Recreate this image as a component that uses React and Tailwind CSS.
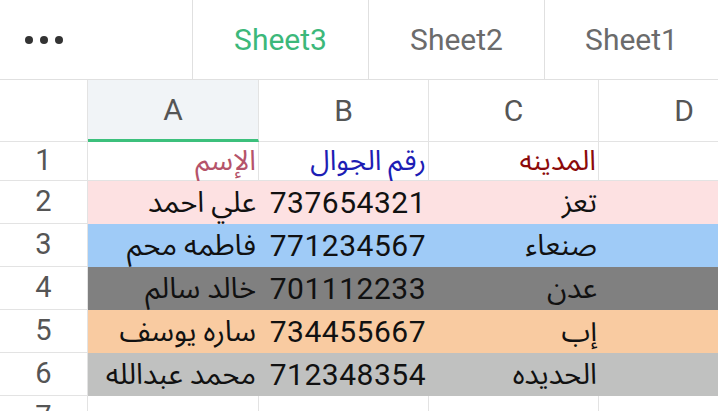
const rows = [
  { n: 2, name: "علي احمد", phone: "737654321", city: "تعز", bg: "bg-[#fde1e2]" },
  { n: 3, name: "فاطمه محم", phone: "771234567", city: "صنعاء", bg: "bg-[#9fcbf7]" },
  { n: 4, name: "خالد سالم", phone: "701112233", city: "عدن", bg: "bg-[#808080]" },
  { n: 5, name: "ساره يوسف", phone: "734455667", city: "إب", bg: "bg-[#f9cba1]" },
  { n: 6, name: "محمد عبدالله", phone: "712348354", city: "الحديده", bg: "bg-[#c0c1c0]" },
];

function RowNum({ n, h }) {
  return (
    <div
      className={`w-[88px] shrink-0 ${h} flex items-center justify-center border-r border-b border-[#e3e3e3] text-[29px] text-[#555]`}
    >
      {n}
    </div>
  );
}

export default function App() {
  return (
    <div className="w-[718px] h-[411px] overflow-hidden bg-white font-['Roboto','Noto_Sans_Arabic','DejaVu_Sans',sans-serif]">
      {/* sheet tabs */}
      <div className="flex h-[80px] border-b border-[#e0e0e0]">
        <div className="w-[192px] shrink-0 flex items-center gap-[7px] pl-[25px]">
          <span className="w-[8px] h-[8px] rounded-full bg-[#333]" />
          <span className="w-[8px] h-[8px] rounded-full bg-[#333]" />
          <span className="w-[8px] h-[8px] rounded-full bg-[#333]" />
        </div>
        <div className="w-[176px] shrink-0 border-l border-[#e0e0e0] flex items-center justify-center text-[30px] text-[#3cb87a]">
          Sheet3
        </div>
        <div className="w-[176px] shrink-0 border-l border-[#e0e0e0] flex items-center justify-center text-[30px] text-[#6b6b6b]">
          Sheet2
        </div>
        <div className="flex-1 border-l border-[#e0e0e0] flex items-center justify-center text-[30px] text-[#6b6b6b]">
          Sheet1
        </div>
      </div>

      {/* column headers */}
      <div className="flex h-[62px] text-[30px] text-[#555]">
        <div className="w-[88px] shrink-0 border-r border-b border-[#e3e3e3]" />
        <div className="w-[171px] shrink-0 bg-[#f1f4f7] border-r border-[#e3e3e3] border-b-[3px] border-b-[#3cc07c] flex items-center justify-center">
          A
        </div>
        <div className="w-[170px] shrink-0 border-r border-b border-[#e3e3e3] flex items-center justify-center">
          B
        </div>
        <div className="w-[170px] shrink-0 border-r border-b border-[#e3e3e3] flex items-center justify-center">
          C
        </div>
        <div className="w-[170px] shrink-0 border-b border-[#e3e3e3] flex items-center justify-center">D</div>
      </div>

      {/* row 1: headers */}
      <div className="flex text-[28px]">
        <RowNum n={1} h="h-[39px]" />
        <div dir="rtl" className="w-[171px] shrink-0 h-[39px] border-r border-b border-[#e3e3e3] flex items-center pr-[2px] text-[#b5536a]">
          الإسم
        </div>
        <div dir="rtl" className="w-[170px] shrink-0 h-[39px] border-r border-b border-[#e3e3e3] flex items-center pr-[2px] text-[#1d1db4]">
          رقم الجوال
        </div>
        <div dir="rtl" className="w-[170px] shrink-0 h-[39px] border-r border-b border-[#e3e3e3] flex items-center pr-[2px] text-[#8b0a0a]">
          المدينه
        </div>
        <div className="flex-1 h-[39px] border-b border-[#e3e3e3]" />
      </div>

      {rows.map((r) => (
        <div key={r.n} className="flex text-[29px] text-[#111]">
          <RowNum n={r.n} h="h-[43px]" />
          <div className={`flex flex-1 h-[43px] ${r.bg}`}>
            <div dir="rtl" className="w-[171px] shrink-0 flex items-center pr-[3px]">
              {r.name}
            </div>
            <div className="w-[170px] shrink-0 flex items-center justify-end pr-[3px] text-[30px] tracking-[0.5px]">
              {r.phone}
            </div>
            <div dir="rtl" className="w-[170px] shrink-0 flex items-center pr-[2px]">
              {r.city}
            </div>
          </div>
        </div>
      ))}

      {/* row 7 */}
      <div className="flex text-[29px]">
        <RowNum n={7} h="h-[43px]" />
        <div className="w-[171px] shrink-0 h-[43px] border-r border-[#e3e3e3]" />
        <div className="w-[170px] shrink-0 h-[43px] border-r border-[#e3e3e3]" />
        <div className="w-[170px] shrink-0 h-[43px] border-r border-[#e3e3e3]" />
      </div>
    </div>
  );
}
